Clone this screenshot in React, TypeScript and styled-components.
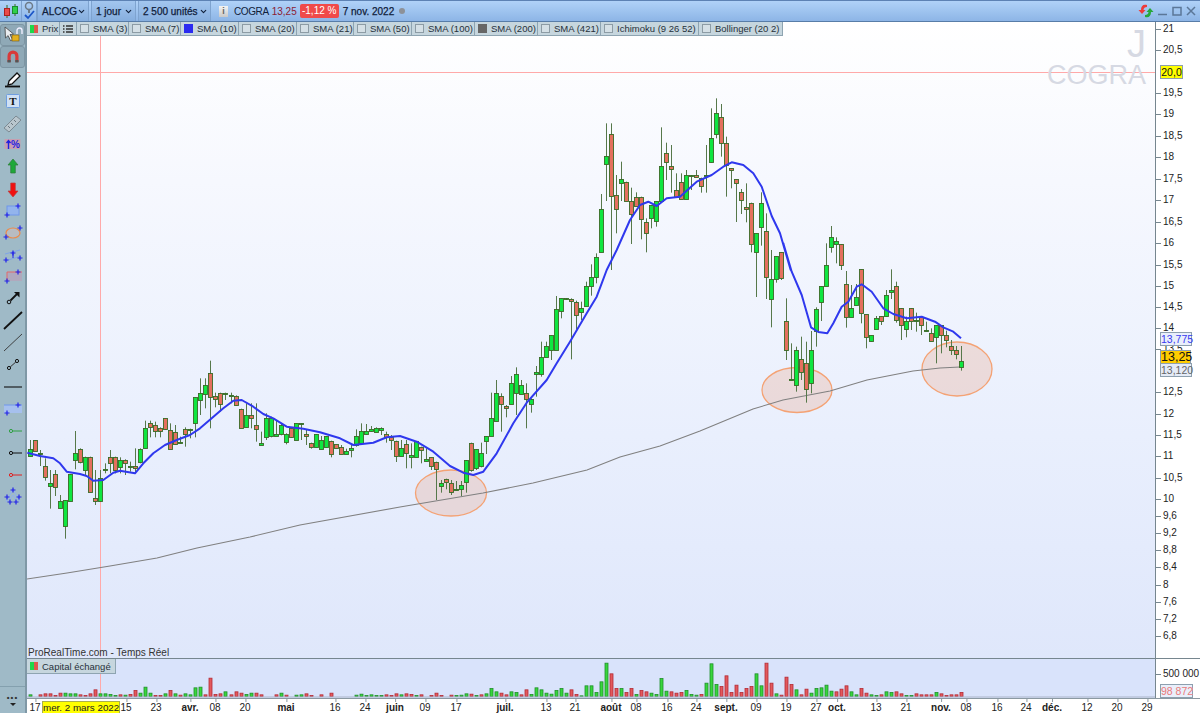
import React from "react";
import styled, { createGlobalStyle } from "styled-components";
import { ChevronDown } from "lucide-react";

const GlobalStyle = createGlobalStyle`
  html, body {
    margin: 0;
    padding: 0;
    width: 1200px;
    height: 713px;
    overflow: hidden;
    background: #fff;
    font-family: "Liberation Sans", Arial, sans-serif;
  }
`;

type Candle = { i: number; top: number; bot: number; hi: number; lo: number; up: boolean };
type Row = [string, number, number, number, number];

// values read off 3x crops: first = index of first candle, base = y origin of the crop
const table = (first: number, base: number, rows: Row[]): Candle[] =>
  rows.map(([c, top, bot, hi, lo], n) => ({
    i: first + n,
    top: base + top / 3,
    bot: base + bot / 3,
    hi: base + hi / 3,
    lo: base + lo / 3,
    up: c === "g",
  }));

const candles: Candle[] = [
  ...table(0, 350, [
    ["g", 296, 318, 270, 318], ["r", 270, 302, 270, 302], ["g", 310, 314, 300, 348], ["r", 348, 380, 325, 392],
    ["g", 398, 406, 360, 476], ["r", 372, 412, 360, 438], ["g", 453, 473, 435, 475], ["g", 450, 527, 450, 566],
    ["g", 372, 452, 372, 452], ["g", 310, 330, 243, 358], ["r", 296, 334, 295, 340], ["g", 320, 360, 320, 375],
    ["r", 320, 426, 320, 426], ["r", 445, 453, 360, 465], ["g", 385, 455, 360, 455], ["g", 356, 360, 340, 370],
    ["r", 322, 340, 300, 370], ["r", 322, 360, 320, 370], ["g", 330, 350, 322, 370], ["r", 330, 340, 328, 375],
    ["g", 348, 352, 335, 365], ["r", 349, 355, 295, 370], ["g", 296, 335, 295, 340], ["g", 233, 292, 212, 295],
    ["r", 220, 233, 212, 262], ["r", 226, 245, 215, 262], ["r", 233, 243, 232, 262], ["r", 205, 238, 205, 240],
    ["r", 240, 296, 220, 296], ["r", 245, 280, 225, 285], ["g", 275, 278, 260, 280], ["r", 238, 253, 232, 290],
    ["g", 236, 240, 236, 265], ["g", 142, 220, 142, 262], ["g", 128, 150, 85, 195], ["g", 104, 130, 85, 175],
    ["r", 70, 142, 32, 235], ["r", 138, 148, 128, 172], ["r", 130, 163, 128, 185], ["g", 129, 132, 128, 150],
    ["g", 136, 139, 128, 160], ["r", 138, 166, 136, 168], ["r", 176, 232, 176, 232], ["g", 196, 232, 160, 232],
    ["r", 196, 205, 160, 235], ["r", 226, 238, 160, 275], ["g", 278, 283, 245, 283], ["g", 205, 262, 190, 270],
    ["g", 205, 258, 200, 262], ["g", 252, 258, 210, 258], ["g", 225, 252, 220, 256], ["g", 252, 277, 250, 283],
    ["r", 235, 262, 235, 264], ["g", 220, 270, 220, 270], ["g", 219, 222, 219, 270], ["r", 252, 258, 240, 285],
    ["r", 278, 290, 278, 296], ["g", 252, 290, 252, 292], ["g", 270, 296, 258, 296], ["g", 258, 290, 258, 292],
    ["r", 272, 310, 272, 322], ["r", 283, 295, 283, 296], ["r", 290, 310, 285, 310], ["g", 302, 310, 296, 310],
    ["g", 295, 302, 285, 322], ["g", 258, 285, 238, 290], ["g", 244, 280, 220, 282], ["g", 244, 252, 222, 254],
    ["g", 238, 244, 228, 246], ["g", 233, 244, 232, 246], ["g", 233, 238, 232, 255], ["r", 252, 262, 245, 278],
    ["r", 262, 272, 255, 300], ["r", 272, 318, 272, 336],
  ]),
  ...table(74, 280, [
    ["g", 503, 527, 480, 527], ["r", 493, 520, 480, 565], ["g", 525, 530, 490, 565], ["g", 484, 532, 484, 532],
    ["r", 502, 512, 500, 550], ["g", 538, 543, 505, 545], ["r", 532, 558, 532, 570], ["r", 545, 565, 545, 660],
    ["g", 608, 616, 600, 638], ["r", 598, 608, 596, 628], ["r", 608, 636, 600, 645], ["g", 626, 630, 603, 632],
    ["g", 616, 628, 603, 648], ["g", 540, 607, 540, 638], ["r", 488, 570, 488, 575], ["g", 507, 565, 507, 570],
    ["g", 520, 560, 488, 562], ["g", 468, 482, 468, 522], ["g", 415, 468, 338, 468], ["g", 340, 424, 300, 424],
    ["r", 348, 372, 340, 455], ["r", 378, 385, 375, 412], ["g", 308, 372, 288, 372], ["g", 282, 338, 262, 405],
    ["g", 314, 340, 300, 342], ["r", 340, 358, 310, 445], ["g", 358, 372, 355, 398], ["g", 276, 281, 258, 350],
    ["g", 230, 282, 185, 290], ["g", 198, 230, 185, 230], ["g", 166, 210, 166, 240], ["g", 88, 210, 48, 210],
    ["g", 55, 94, 55, 115], ["g", 54, 58, 54, 60], ["r", 58, 64, 55, 238], ["r", 65, 104, 62, 148],
    ["g", 83, 94, 65, 120], ["g", 17, 76, 5, 78], ["g", -10, 17, -47, 47],
  ]),
  ...table(113, 90, [
    ["g", 500, 560, 490, 580], ["g", 358, 486, 312, 486], ["g", 198, 222, 100, 333], ["r", 132, 318, 100, 540],
    ["r", 314, 357, 255, 430], ["g", 268, 280, 215, 333], ["r", 275, 332, 275, 334], ["r", 332, 372, 293, 462],
    ["r", 320, 346, 307, 348], ["r", 320, 385, 320, 448], ["r", 396, 428, 385, 487], ["g", 346, 385, 346, 415],
    ["g", 334, 395, 334, 410], ["g", 228, 332, 112, 332], ["r", 190, 217, 158, 270], ["r", 228, 236, 165, 308],
    ["r", 300, 322, 250, 322], ["r", 275, 327, 250, 327], ["g", 256, 327, 240, 327], ["g", 255, 258, 255, 300],
    ["r", 256, 262, 240, 262], ["r", 263, 288, 263, 308], ["g", 255, 258, 165, 308], ["g", 145, 218, 55, 218],
    ["g", 68, 132, 25, 145], ["r", 82, 160, 42, 200], ["r", 160, 225, 140, 320], ["r", 235, 242, 235, 295],
    ["r", 268, 280, 268, 396], ["r", 307, 332, 297, 372], ["r", 352, 358, 280, 397], ["r", 338, 462, 338, 487],
    ["g", 430, 486, 430, 621], ["g", 338, 410, 307, 467], ["r", 423, 561, 370, 627],
  ]),
  ...table(148, 220, [
    ["g", 178, 237, 90, 322], ["g", 108, 178, 108, 188], ["r", 97, 174, 97, 180], ["r", 302, 390, 235, 420],
    ["g", 478, 482, 370, 482], ["g", 390, 495, 380, 515], ["r", 418, 456, 350, 480], ["r", 430, 508, 365, 548],
    ["g", 390, 490, 333, 520], ["g", 268, 333, 262, 380], ["g", 198, 245, 198, 303], ["g", 135, 198, 70, 198],
    ["g", 52, 82, 18, 98], ["g", 64, 72, 52, 130], ["r", 72, 135, 72, 150], ["r", 192, 290, 153, 323],
    ["g", 264, 290, 195, 290], ["g", 232, 256, 192, 256], ["r", 148, 280, 148, 310], ["r", 283, 352, 283, 385],
    ["g", 346, 365, 346, 365], ["g", 295, 327, 288, 327], ["r", 288, 302, 288, 315], ["g", 226, 290, 210, 290],
    ["g", 210, 217, 148, 237], ["r", 198, 300, 185, 308], ["r", 264, 314, 264, 360], ["g", 302, 327, 290, 352],
    ["r", 264, 302, 264, 330], ["g", 301, 305, 278, 335], ["r", 290, 313, 288, 345], ["g", 331, 334, 305, 335],
    ["r", 340, 364, 325, 364], ["g", 315, 352, 315, 430], ["r", 315, 345, 315, 400], ["r", 345, 360, 332, 382],
    ["r", 378, 390, 360, 405], ["r", 390, 403, 378, 418], ["g", 424, 442, 378, 452],
  ]),
];

const xOf = (i: number) => 30.3 + 5.005 * i;

const crop = (ox: number, oy: number, pts: number[][]) => pts.map(([x, y]) => [ox + x / 3, oy + y / 3]);

const sma10 = [
  ...crop(20, 350, [[22, 308], [60, 318], [100, 325], [120, 340], [140, 365], [180, 372], [200, 378], [220, 392], [250, 390], [280, 368], [300, 362], [345, 370], [370, 340], [400, 310], [435, 285], [470, 270], [510, 255], [540, 235], [575, 205], [610, 175], [640, 152], [665, 150], [700, 170], [730, 192], [760, 205], [800, 230], [850, 236], [900, 247], [960, 265], [1000, 285], [1060, 278], [1100, 262], [1140, 258]]),
  ...crop(400, 280, [[50, 485], [100, 515], [150, 558], [190, 578], [220, 585], [250, 575], [290, 520], [340, 430], [380, 368], [440, 300], [470, 250], [510, 185], [560, 100], [590, 50], [605, 10]]),
  ...crop(580, 90, [[80, 540], [110, 480], [150, 390], [180, 345], [205, 335], [230, 348], [260, 325], [300, 320], [350, 275], [395, 255], [430, 230], [455, 217], [490, 225], [520, 250], [545, 290], [575, 378], [600, 430], [632, 540]]),
  ...crop(740, 220, [[130, 70], [155, 155], [185, 225], [213, 322], [235, 336], [262, 340], [280, 310], [305, 260], [325, 245], [350, 200], [365, 193], [395, 215], [430, 265], [460, 282], [500, 295], [545, 290], [585, 305], [610, 322], [640, 335], [663, 355]]),
];

const sma200 = [
  [27, 579], [67, 573], [110, 566], [157, 558], [197, 548], [250, 537], [300, 525], [400, 507], [483, 493], [533, 483],
  [587, 470], [620, 457], [660, 446], [700, 431], [753, 409], [783, 400], [830, 391], [867, 380], [913, 371], [940, 368], [960, 367],
];

const toPoints = (pts: number[][]) => pts.map(([x, y]) => `${x.toFixed(1)},${y.toFixed(1)}`).join(" ");

// volume heights in 3x pixels, "-" sign = red bar
const volumes = [
  5, 0, -5, -8, -8, -3, -10, 10, 8, 8, -5, -3, -8, -20, 8, 8, 6, 3, -5, 4, -6, -18, 10, 28, 10, -3, -3, 8, -18, 8, -4, 8, 5, 26, 28, -5,
  -55, -6, -8, 14, -5, -14, -10, 6, 10, -10, -5, 0, 0, -5, 10, -4, 0, 4, 5, -8, -3, 0, -5, 0, -10, 0, 0, 0, 0, 4, 7, 3, 5, 3, 3, -5, -3, -8,
  5, -8, -6, 3, -5, 0, -3, -10, -3, 0, -4, 3, 4, 8, -7, 3, -5, 8, 24, 14, -10, -5, 14, 12, -5, -20, 6, 26, 20, 10, 7, 18, 24, 10, -20, -6,
  2, 32, 32, 12, 44, 100, -68, -24, 24, -12, -24, 6, -18, -14, 10, 6, 54, 16, -14, -10, -12, 18, 6, 4, -6, 40, 98, 36, -30, -62, -12, -34, -12, -24,
  -30, 68, 32, -100, -40, 8, -4, -58, -36, 20, -5, -22, 10, 24, 26, 34, 16, -14, -22, -32, 14, 5, -24, -10, 5, 3, -5, 14, 12, -14, -8, 3, 3, -8, -5, -5, -5, 12, -8, -3, -5, -5, -12,
];

const priceLabels: [string, number][] = [
  ["21", 29], ["20,5", 50], ["19,5", 93], ["19", 114], ["18,5", 136], ["18", 157], ["17,5", 179], ["17", 200],
  ["16,5", 222], ["16", 243], ["15,5", 265], ["15", 286], ["14,5", 307], ["14", 328], ["13,5", 349], ["12,5", 392],
  ["12", 414], ["11,5", 435], ["11", 456], ["10,5", 478], ["10", 499], ["9,6", 516], ["9,2", 533], ["8,8", 550],
  ["8,4", 567], ["8", 585], ["7,6", 602], ["7,2", 619], ["6,8", 636],
];

const timeLabels: [string, number, boolean?][] = [
  ["17", 35], ["15", 126], ["23", 156], ["avr.", 190, true], ["08", 215], ["20", 245], ["mai", 286, true], ["16", 335],
  ["24", 365], ["juin", 395, true], ["09", 425], ["17", 456], ["juil.", 505, true], ["13", 546], ["21", 575],
  ["août", 611, true], ["08", 636], ["16", 667], ["24", 696], ["sept.", 726, true], ["09", 756], ["19", 786], ["27", 816],
  ["oct.", 837, true], ["13", 876], ["21", 906], ["nov.", 941, true], ["08", 966], ["16", 997], ["24", 1026],
  ["déc.", 1052, true], ["12", 1087], ["20", 1117], ["29", 1147],
];

const legend: { label: string; w: number; box?: string }[] = [
  { label: "SMA (3)", w: 52 },
  { label: "SMA (7)", w: 52 },
  { label: "SMA (10)", w: 58, box: "#2b2bf0" },
  { label: "SMA (20)", w: 58 },
  { label: "SMA (21)", w: 57 },
  { label: "SMA (50)", w: 58 },
  { label: "SMA (100)", w: 63 },
  { label: "SMA (200)", w: 63, box: "#666" },
  { label: "SMA (421)", w: 63 },
  { label: "Ichimoku (9 26 52)", w: 98 },
  { label: "Bollinger (20 2)", w: 84 },
];

const App_ = styled.div`
  width: 1200px;
  height: 713px;
  display: flex;
  flex-direction: column;
  overflow: hidden;
  color: #222;
  font-size: 10px;
`;

const TitleBar = styled.header`
  height: 22px;
  box-sizing: border-box;
  flex: none;
  display: flex;
  align-items: center;
  border-top: 1px solid #5d82b4;
  border-bottom: 1px solid #587da8;
  background: linear-gradient(#b0d2f8, #8db5e6);
`;

const TitleCell = styled.div<{ $w: number }>`
  width: ${(p) => p.$w}px;
  height: 100%;
  flex: none;
  box-sizing: border-box;
  display: flex;
  align-items: center;
  justify-content: center;
  border-right: 1px solid #7ea3cf;
`;

const Dropdown = styled.div<{ $w: number }>`
  width: ${(p) => p.$w}px;
  height: 100%;
  flex: none;
  box-sizing: border-box;
  display: flex;
  align-items: center;
  justify-content: space-between;
  padding: 0 2px 0 4px;
  margin-right: 2px;
  border-left: 1px solid #7ea3cf;
  border-right: 1px solid #7ea3cf;
  background: linear-gradient(#a3c6ef, #86aede);
  font-size: 10px;
  white-space: nowrap;
  color: #10203a;
  -webkit-text-stroke: 0.25px #10203a;
  svg { flex: none; }
`;

const Quote = styled.div`
  display: flex;
  align-items: center;
  margin-left: 6px;
  font-size: 10px;
  white-space: nowrap;
  color: #10203a;
`;

const InfoBadge = styled.span`
  width: 9px;
  height: 11px;
  margin-right: 6px;
  background: linear-gradient(#f4f4f4, #c9c9c9);
  color: #666;
  font-size: 9px;
  font-weight: bold;
  line-height: 11px;
  text-align: center;
`;

const QuoteName = styled.span`
  letter-spacing: -0.4px;
`;

const QuotePrice = styled.span`
  margin-left: 3px;
  color: #8c1c33;
`;

const QuoteChange = styled.span`
  box-sizing: border-box;
  margin: 0 4px 0 3px;
  width: 39px;
  height: 14px;
  line-height: 14px;
  text-align: center;
  border-radius: 2px;
  background: #f04a4a;
  color: #fff;
`;

const QuoteDate = styled.span`
  -webkit-text-stroke: 0.25px #10203a;
`;

const Dot = styled.span`
  width: 6px;
  height: 6px;
  margin-left: 5px;
  border-radius: 50%;
  background: #8d9198;
`;

const WindowControls = styled.div`
  margin-left: auto;
  display: flex;
  align-items: center;
  gap: 2px;
  padding-right: 3px;
`;

const Body = styled.div`
  flex: 1;
  display: flex;
  min-height: 0;
`;

const Sidebar = styled.aside`
  width: 27px;
  box-sizing: border-box;
  flex: none;
  display: flex;
  flex-direction: column;
  padding-top: 2px;
  background: #9fbac7;
  border-right: 2px solid #7f98a6;
`;

const ToolButton = styled.div<{ $active?: boolean }>`
  height: 22px;
  flex: none;
  box-sizing: border-box;
  display: flex;
  align-items: center;
  justify-content: center;
  border-radius: 3px;
  ${(p) => p.$active && "background: #8fa9b7; border: 1px solid #7d95a3;"}
  svg { display: block; flex: none; }
`;

const SidebarFooter = styled.div`
  margin-top: auto;
  height: 27px;
  box-sizing: border-box;
  border-top: 1px solid #84a0ae;
  display: flex;
  flex-direction: column;
  align-items: center;
  padding-top: 8px;
  line-height: 6px;
  color: #333;
`;

const FooterDots = styled.span`
  font-size: 8px;
  letter-spacing: 1px;
  font-weight: bold;
`;

const FooterCaret = styled.span`
  width: 0;
  height: 0;
  margin-top: 2px;
  border-left: 3px solid transparent;
  border-right: 3px solid transparent;
  border-top: 3px solid #222;
`;

const Panes = styled.main`
  flex: 1;
  min-width: 0;
  display: flex;
  flex-direction: column;
`;

const PriceRow = styled.section`
  height: 636px;
  flex: none;
  display: flex;
`;

const VolumeRow = styled.section`
  height: 40px;
  flex: none;
  display: flex;
  border-top: 1px solid #76868f;
  box-sizing: border-box;
`;

const Plot = styled.div`
  position: relative;
  flex: 1;
  min-width: 0;
  background: linear-gradient(#ffffff 0%, #f6f8fe 25%, #e9effd 65%, #dfe7fb 100%);
  overflow: hidden;
  svg { position: absolute; left: 0; top: 0; display: block; }
`;

const VolumePlot = styled(Plot)`
  background: #d9e3fb;
`;

const LegendBar = styled.div`
  position: absolute;
  left: 0;
  top: 0;
  display: flex;
  height: 14px;
  z-index: 2;
`;

const LegendTab = styled.div<{ $w: number }>`
  width: ${(p) => p.$w}px;
  flex: none;
  box-sizing: border-box;
  display: flex;
  align-items: center;
  gap: 4px;
  padding-left: 3px;
  background: #c6d6de;
  border: 1px solid #8ea4b1;
  border-top: 0;
  border-left: 0;
  font-size: 9.5px;
  white-space: nowrap;
  color: #27313a;
  svg { position: static; }
`;

const CheckBox = styled.span<{ $fill?: string }>`
  width: 7px;
  height: 7px;
  flex: none;
  border: 1px solid ${(p) => p.$fill ?? "#8d9ca5"};
  background: ${(p) => p.$fill ?? "#d5e0e6"};
`;

const Swatch = styled.span`
  width: 8px;
  height: 8px;
  flex: none;
  background: linear-gradient(90deg, #1fd84a 50%, #e0584e 50%);
`;

const VolumeTab = styled(LegendTab)`
  position: absolute;
  left: 0;
  top: 0;
  height: 15px;
  z-index: 2;
`;

const Watermark = styled.div`
  position: absolute;
  right: 9px;
  top: 4px;
  text-align: right;
  color: #d6d9e3;
  z-index: 1;
`;

const WatermarkJ = styled.div`
  font-size: 38px;
  height: 36px;
  line-height: 36px;
`;

const WatermarkName = styled.div`
  font-size: 27px;
  height: 27px;
  line-height: 27px;
`;

const Credit = styled.div`
  position: absolute;
  left: 1px;
  bottom: 0;
  font-size: 10px;
  color: #333;
  z-index: 1;
`;

const Axis = styled.div`
  position: relative;
  width: 45px;
  flex: none;
  box-sizing: border-box;
  background: #fff;
  border-left: 1px solid #76868f;
`;

const AxisMark = styled.div.attrs<{ $y: number }>((p) => ({ style: { top: `${p.$y}px` } }))<{ $y: number }>`
  position: absolute;
  left: 0;
  height: 12px;
  line-height: 12px;
  margin-top: -6px;
  padding-left: 7px;
  color: #222;
  font-size: 10px;
  white-space: nowrap;
  &::before {
    content: "";
    position: absolute;
    left: 0;
    top: 6px;
    width: 5px;
    height: 1px;
    background: #76868f;
  }
`;

const AxisTag = styled.div.attrs<{ $y: number }>((p) => ({ style: { top: `${p.$y}px` } }))<{
  $y: number;
  $bg: string;
  $fg: string;
  $w: number;
  $big?: boolean;
}>`
  position: absolute;
  left: 4px;
  width: ${(p) => p.$w}px;
  height: 14px;
  box-sizing: border-box;
  line-height: 12px;
  text-align: center;
  background: ${(p) => p.$bg};
  color: ${(p) => p.$fg};
  border: 1px solid #8d9fae;
  font-size: ${(p) => (p.$big ? 12.5 : 10.5)}px;
  white-space: nowrap;
  z-index: 1;
`;

const TimeAxis = styled.div`
  position: relative;
  height: 15px;
  flex: none;
  background: #fff;
  border-top: 1px solid #8b99a2;
  box-sizing: border-box;
`;

const TimeLabel = styled.div.attrs<{ $x: number }>((p) => ({ style: { left: `${p.$x - 27}px` } }))<{
  $x: number;
  $bold?: boolean;
}>`
  position: absolute;
  top: 3px;
  transform: translateX(-50%);
  font-size: 10px;
  line-height: 12px;
  color: #222;
  font-weight: ${(p) => (p.$bold ? "bold" : "normal")};
  &::before {
    content: "";
    position: absolute;
    left: 50%;
    top: -3px;
    width: 1px;
    height: 3px;
    background: #8b99a2;
  }
`;

const DateTag = styled.div`
  position: absolute;
  left: 15px;
  top: 2px;
  width: 78px;
  height: 13px;
  box-sizing: border-box;
  line-height: 12px;
  text-align: center;
  background: #ffff00;
  border: 1px solid #aab04a;
  border-bottom: 0;
  font-size: 9.8px;
  white-space: nowrap;
  z-index: 1;
`;

const Cross = ({ x, y }: { x: number; y: number }) => (
  <path d={`M${x - 2.5} ${y}h5M${x} ${y - 2.5}v5`} stroke="#2222e8" strokeWidth="1.2" fill="none" />
);

const Tool = ({ children }: { children: React.ReactNode }) => (
  <svg width="26" height="22" viewBox="0 0 26 22">
    {children}
  </svg>
);

const tools: { active?: boolean; icon: React.ReactNode }[] = [
  {
    active: true,
    icon: (
      <Tool>
        <path d="M5 3l8.500 7-3.500.6 2.500 5-2 1-2.400-5-2.600 2.400z" fill="#e9ecef" stroke="#444" strokeWidth=".8" />
        <rect x="12" y="11" width="7" height="6" fill="#e2b020" stroke="#7a5a10" strokeWidth=".6" />
        <path d="M17 10V6.500a2.500 2.500 0 0 1 5 0V10" fill="none" stroke="#eef" strokeWidth="1.400" />
      </Tool>
    ),
  },
  {
    active: true,
    icon: (
      <Tool>
        <path d="M7.500 16V10a5.500 5.500 0 0 1 11 0v6h-3.200v-6a2.300 2.300 0 0 0-4.600 0v6z" fill="#d93a3a" />
        <path d="M7.500 14h3.200v2.500H7.500zM15.300 14h3.200v2.500h-3.200z" fill="#555" />
      </Tool>
    ),
  },
  {
    icon: (
      <Tool>
        <path d="M9 13l8-8 3 3-8 8-4 1z" fill="#fff" stroke="#111" strokeWidth="1.300" />
        <path d="M5 18.500h15" stroke="#111" strokeWidth="1.800" />
      </Tool>
    ),
  },
  {
    icon: (
      <Tool>
        <rect x="6.500" y="4.500" width="13" height="13" rx="1" fill="#cfe0f4" stroke="#6f9ee0" />
        <text x="13" y="15" fontSize="11" fontWeight="bold" textAnchor="middle" fontFamily="Liberation Serif, serif" fill="#111">
          T
        </text>
      </Tool>
    ),
  },
  {
    icon: (
      <Tool>
        <path d="M4 16L16 4l5 4L9 20z" fill="#b9c6cd" stroke="#7c8a92" />
        <path d="M8 14l2 2M11 11l2 2M14 8l2 2" stroke="#6a767e" />
      </Tool>
    ),
  },
  {
    icon: (
      <Tool>
        <rect x="4.500" y="5" width="16" height="10" fill="#c79fb0" />
        <path d="M8.500 15V7M6.500 9l2-2.500 2 2.500" stroke="#1f1fe0" strokeWidth="1.400" fill="none" />
        <text x="15.500" y="14" fontSize="10" fontWeight="bold" textAnchor="middle" fontFamily="Liberation Sans, sans-serif" fill="#1f1fe0">
          %
        </text>
      </Tool>
    ),
  },
  {
    icon: (
      <Tool>
        <path d="M13 3l5 6h-2.700v8h-4.600V9H8z" fill="#1fa83a" stroke="#2f7a3a" strokeWidth=".7" />
      </Tool>
    ),
  },
  {
    icon: (
      <Tool>
        <path d="M13 19l5-6h-2.700V5h-4.600v8H8z" fill="#f01010" stroke="#b84040" strokeWidth=".7" />
      </Tool>
    ),
  },
  {
    icon: (
      <Tool>
        <rect x="7" y="6" width="12" height="9" fill="#93b4ec" stroke="#6f96ea" />
        <Cross x={7} y={15} />
        <Cross x={18} y={6} />
      </Tool>
    ),
  },
  {
    icon: (
      <Tool>
        <ellipse cx="13" cy="11" rx="7" ry="5" fill="#b8bcc2" stroke="#ec8a4a" strokeWidth="1.200" />
        <Cross x={6} y={15} />
        <Cross x={20} y={6} />
      </Tool>
    ),
  },
  {
    icon: (
      <Tool>
        <path d="M5 10l15-4M5 17l16-5" stroke="#7fa3e8" fill="none" />
        <path d="M13 14V8" stroke="#2222e8" />
        <Cross x={6} y={16} />
        <Cross x={13} y={9} />
        <Cross x={20} y={14} />
      </Tool>
    ),
  },
  {
    icon: (
      <Tool>
        <rect x="7" y="6" width="15" height="9" fill="#b0a9bd" />
        <path d="M7 15V6h15" stroke="#e26a6a" fill="none" />
        <Cross x={7} y={15} />
        <Cross x={18} y={6} />
      </Tool>
    ),
  },
  {
    icon: (
      <Tool>
        <circle cx="9" cy="14" r="1.800" fill="none" stroke="#111" />
        <path d="M10.500 12.500L18 5" stroke="#111" strokeWidth="1.800" />
        <path d="M14 4h5.500v5.500z" fill="#111" />
      </Tool>
    ),
  },
  {
    icon: (
      <Tool>
        <path d="M4 19L22 2" stroke="#111" strokeWidth="1.800" />
      </Tool>
    ),
  },
  {
    icon: (
      <Tool>
        <path d="M4 19L22 2" stroke="#333" strokeWidth=".9" />
      </Tool>
    ),
  },
  {
    icon: (
      <Tool>
        <circle cx="9" cy="14" r="1.600" fill="none" stroke="#111" />
        <circle cx="17" cy="7" r="1.600" fill="none" stroke="#111" />
        <path d="M10.200 13L15.800 8" stroke="#333" />
      </Tool>
    ),
  },
  {
    icon: (
      <Tool>
        <path d="M4 11h18" stroke="#111" strokeWidth="1.100" />
      </Tool>
    ),
  },
  {
    icon: (
      <Tool>
        <rect x="4" y="7" width="18" height="8" fill="#a6c0ee" />
        <path d="M4 7h18" stroke="#6f96ea" />
        <Cross x={7} y={15} />
        <Cross x={18} y={7} />
      </Tool>
    ),
  },
  {
    icon: (
      <Tool>
        <circle cx="11" cy="11" r="1.600" fill="none" stroke="#2ea043" />
        <path d="M12.600 11H22" stroke="#2ea043" />
      </Tool>
    ),
  },
  {
    icon: (
      <Tool>
        <circle cx="11" cy="11" r="1.600" fill="none" stroke="#111" />
        <path d="M12.600 11H22" stroke="#111" />
      </Tool>
    ),
  },
  {
    icon: (
      <Tool>
        <circle cx="11" cy="11" r="1.600" fill="none" stroke="#e02020" />
        <path d="M12.600 11H22" stroke="#e02020" />
      </Tool>
    ),
  },
  {
    icon: (
      <Tool>
        <path d="M13 3L6 16M13 3l7 13M9 15l4-6 4 6" stroke="#8fb0ee" fill="none" />
        <Cross x={13} y={4} />
        <Cross x={7} y={11} />
        <Cross x={19} y={11} />
        <Cross x={10} y={16} />
        <Cross x={16} y={16} />
      </Tool>
    ),
  },
];

const CandleLogo = () => (
  <svg width="16" height="16" viewBox="0 0 16 16">
    <path d="M4 2v13M12 1v12" stroke="#3a6a20" />
    <rect x="1.500" y="5.500" width="5" height="7" fill="#ea4b4b" stroke="#a22" />
    <rect x="9.500" y="3.500" width="5" height="7" fill="#2fd04a" stroke="#1a8a30" />
  </svg>
);

const ChainCheck = () => (
  <svg width="13" height="20" viewBox="0 0 13 20">
    <circle cx="6" cy="5" r="3.500" fill="none" stroke="#6d7a88" strokeWidth="1.500" />
    <path d="M6 8v4" stroke="#6d7a88" strokeWidth="2" />
    <path d="M2 14l3 3 6-7" stroke="#1c56c8" strokeWidth="1.800" fill="none" />
  </svg>
);

const RefreshArrows = () => (
  <svg width="18" height="16" viewBox="0 0 18 16">
    <path d="M10 2C6 1 4 3 4 7H1.500l3.500 4 3.500-4H6.500C6.500 5 8 4 10 4z" fill="#ee3b3b" />
    <path d="M8 14c4 1 6-1 6-5h2.500L13 5 9.500 9h2c0 2-1.500 3-3.500 3z" fill="#27a83a" />
  </svg>
);

const WinIcon = ({ d }: { d: string }) => (
  <svg width="12" height="12" viewBox="0 0 12 12">
    <path d={d} fill="none" stroke="#5b7798" strokeWidth="1.500" />
  </svg>
);

const CandleChart = () => (
  <svg width="1128" height="635" viewBox="27 22 1128 635">
    <path d="M100.500 22V657M27 72.500H1155" stroke="#ffa9a9" strokeWidth="1" fill="none" />
    <ellipse cx="451" cy="493" rx="35.500" ry="23" fill="#e8a58c" fillOpacity=".3" stroke="#f4a274" strokeWidth="1.300" />
    <ellipse cx="797" cy="390" rx="35" ry="22.500" fill="#e8a58c" fillOpacity=".3" stroke="#f4a274" strokeWidth="1.300" />
    <ellipse cx="957" cy="369" rx="35" ry="27" fill="#e8a58c" fillOpacity=".3" stroke="#f4a274" strokeWidth="1.300" />
    <polyline points={toPoints(sma200)} fill="none" stroke="#808080" strokeWidth="1.100" />
    {candles.map((c) => {
      const x = Math.round(xOf(c.i)) + 0.5;
      return (
        <g key={c.i}>
          <path d={`M${x} ${c.hi}V${c.lo}`} stroke="#56784a" strokeWidth="1" />
          <rect
            x={x - 2}
            y={Math.round(c.top) + 0.5}
            width="4"
            height={Math.max(1, Math.round(c.bot - c.top))}
            fill={c.up ? "#0fe640" : "#e4705e"}
            stroke="#3a6a26"
            strokeWidth=".9"
          />
        </g>
      );
    })}
    <polyline points={toPoints(sma10)} fill="none" stroke="#2f38ee" strokeWidth="2" strokeLinejoin="round" />
  </svg>
);

const VolumeChart = () => (
  <svg width="1128" height="39" viewBox="27 659 1128 39">
    <path d="M100.500 659V698" stroke="#ffa9a9" fill="none" />
    {volumes.map((v, i) => {
      if (v === 0) return null;
      const h = Math.abs(v) / 3;
      const x = Math.round(xOf(i));
      return (
        <rect
          key={i}
          x={x - 1}
          y={696.5 - h}
          width="3"
          height={h}
          fill={v > 0 ? "#38d63c" : "#e2595c"}
          stroke={v > 0 ? "#1f8f2a" : "#b52a35"}
          strokeWidth=".8"
        />
      );
    })}
    <path d="M27 697H1155" stroke="#aab4c8" />
  </svg>
);

export default function App() {
  return (
    <App_>
      <GlobalStyle />
      <TitleBar>
        <TitleCell $w={22}>
          <CandleLogo />
        </TitleCell>
        <TitleCell $w={15}>
          <ChainCheck />
        </TitleCell>
        <Dropdown $w={52}>
          ALCOG
          <ChevronDown size={9} strokeWidth={3} />
        </Dropdown>
        <Dropdown $w={45}>
          1 jour
          <ChevronDown size={9} strokeWidth={3} />
        </Dropdown>
        <Dropdown $w={73}>
          2 500 unités
          <ChevronDown size={9} strokeWidth={3} />
        </Dropdown>
        <Quote>
          <InfoBadge>i</InfoBadge>
          <QuoteName>COGRA</QuoteName>
          <QuotePrice>13,25</QuotePrice>
          <QuoteChange>-1,12 %</QuoteChange>
          <QuoteDate>7 nov. 2022</QuoteDate>
          <Dot />
        </Quote>
        <WindowControls>
          <RefreshArrows />
          <WinIcon d="M1 9.500h9" />
          <WinIcon d="M2 2.500h8v7.500H2z" />
          <WinIcon d="M2 2l8 8M10 2l-8 8" />
        </WindowControls>
      </TitleBar>
      <Body>
        <Sidebar>
          {tools.map((t, i) => (
            <ToolButton key={i} $active={t.active}>
              {t.icon}
            </ToolButton>
          ))}
          <SidebarFooter>
            <FooterDots>•••</FooterDots>
            <FooterCaret />
          </SidebarFooter>
        </Sidebar>
        <Panes>
          <PriceRow>
            <Plot>
              <CandleChart />
              <LegendBar>
                <LegendTab $w={33}>
                  <Swatch />
                  Prix
                </LegendTab>
                <LegendTab $w={17}>
                  <svg width="10" height="8" viewBox="0 0 10 8">
                    <path d="M0 1h1.500M3 1h7M0 4h1.500M3 4h7M0 7h1.500M3 7h7" stroke="#333" strokeWidth="1.300" />
                  </svg>
                </LegendTab>
                {legend.map((l) => (
                  <LegendTab key={l.label} $w={l.w}>
                    <CheckBox $fill={l.box} />
                    {l.label}
                  </LegendTab>
                ))}
              </LegendBar>
              <Watermark>
                <WatermarkJ>J</WatermarkJ>
                <WatermarkName>COGRA</WatermarkName>
              </Watermark>
              <Credit>ProRealTime.com - Temps Réel</Credit>
            </Plot>
            <Axis>
              {priceLabels.map(([t, y]) => (
                <AxisMark key={t} $y={y - 22}>
                  {t}
                </AxisMark>
              ))}
              <AxisTag $y={43} $w={23} $bg="#ffff00" $fg="#111">
                20,0
              </AxisTag>
              <AxisTag $y={310} $w={32} $bg="#e9effb" $fg="#3a3af0">
                13,775
              </AxisTag>
              <AxisTag $y={328} $w={31} $bg="#ffcc00" $fg="#111" $big>
                13,25
              </AxisTag>
              <AxisTag $y={341} $w={32} $bg="#e4ebf7" $fg="#666">
                13,120
              </AxisTag>
            </Axis>
          </PriceRow>
          <VolumeRow>
            <VolumePlot>
              <VolumeChart />
              <VolumeTab $w={89}>
                <Swatch />
                Capital échangé
              </VolumeTab>
            </VolumePlot>
            <Axis>
              <AxisMark $y={15}>500 000</AxisMark>
              <AxisTag $y={25} $w={33} $bg="#e9effb" $fg="#ea7a7a">
                98 872
              </AxisTag>
            </Axis>
          </VolumeRow>
          <TimeAxis>
            {timeLabels.map(([t, x, bold]) => (
              <TimeLabel key={`${t}${x}`} $x={x} $bold={bold}>
                {t}
              </TimeLabel>
            ))}
            <DateTag>mer. 2 mars 2022</DateTag>
          </TimeAxis>
        </Panes>
      </Body>
    </App_>
  );
}
